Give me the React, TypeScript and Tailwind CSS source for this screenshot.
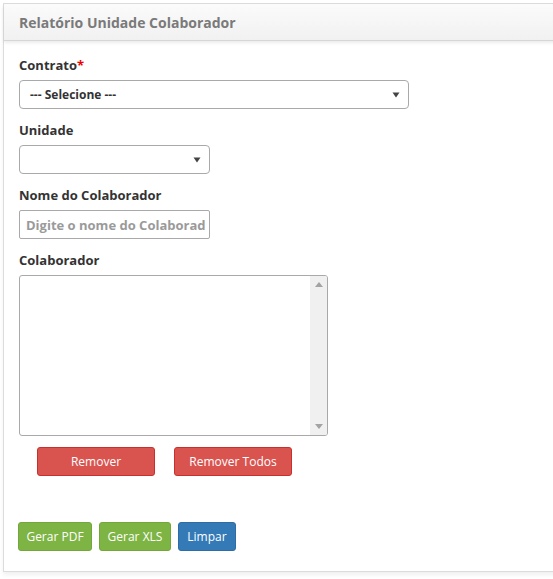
import React from "react";

function Caret() {
  return (
    <svg width="8" height="6" viewBox="0 0 8 6" className="absolute right-[8px] top-1/2 -translate-y-1/2">
      <path d="M0.5 0.5 L7.5 0.5 L4 5.5 Z" fill="#444" />
    </svg>
  );
}

export default function App() {
  return (
    <div className="bg-white w-[553px] h-[579px] overflow-hidden pt-[3px] pl-[3px]" style={{ fontFamily: '"Open Sans", "Liberation Sans", sans-serif' }}>
      <div className="w-[570px] border border-[#dcdcdc] bg-white shadow-[0_3px_4px_rgba(0,0,0,0.06)]">
        <div className="h-[37px] flex items-center pl-[15px] bg-gradient-to-b from-[#fbfbfb] to-[#f1f1f1] border-b border-[#d6d6d6] shadow-[0_2px_3px_rgba(0,0,0,0.08)]">
          <span className="text-[14px] font-bold text-[#7a7a7a]">Relatório Unidade Colaborador</span>
        </div>
        <div className="pl-[15px] pt-[15px] pb-[20px]">
          <div className="text-[13px] font-bold text-[#333] leading-[18px]">
            Contrato<span className="text-[#e00]">*</span>
          </div>
          <div className="relative mt-[6px] w-[390px] h-[29px] border border-[#a9a9a9] rounded-[4px] flex items-center pl-[10px]">
            <span className="text-[12px] font-bold text-[#333]">--- Selecione ---</span>
            <Caret />
          </div>

          <div className="mt-[12px] text-[13px] font-bold text-[#333] leading-[18px]">Unidade</div>
          <div className="relative mt-[6px] w-[191px] h-[29px] border border-[#a9a9a9] rounded-[4px]">
            <Caret />
          </div>

          <div className="mt-[12px] text-[13px] font-bold text-[#333] leading-[18px]">Nome do Colaborador</div>
          <input
            readOnly
            placeholder="Digite o nome do Colaborador"
            className="block mt-[6px] w-[191px] h-[29px] border border-[#a9a9a9] rounded-[2px] pl-[6px] pr-[4px] outline-none text-[13px] font-bold placeholder:text-[#9a9a9a] placeholder:font-bold"
          />

          <div className="mt-[12px] text-[13px] font-bold text-[#333] leading-[18px]">Colaborador</div>
          <div className="mt-[6px] w-[309px] h-[161px] border border-[#a9a9a9] rounded-[3px] flex justify-end overflow-hidden">
            <div className="w-[17px] h-full bg-[#f0f0f0] flex flex-col items-center justify-between py-[6px]">
              <svg width="8" height="5" viewBox="0 0 8 5"><path d="M0 5 L8 5 L4 0 Z" fill="#a3a3a3" /></svg>
              <svg width="8" height="5" viewBox="0 0 8 5"><path d="M0 0 L8 0 L4 5 Z" fill="#a3a3a3" /></svg>
            </div>
          </div>

          <div className="mt-[11px] ml-[18px] flex gap-[19px]">
            <button className="w-[118px] h-[29px] bg-[#d9534f] border border-[#c9302c] rounded-[3px] text-white text-[12px]">Remover</button>
            <button className="w-[118px] h-[29px] bg-[#d9534f] border border-[#c9302c] rounded-[3px] text-white text-[12px]">Remover Todos</button>
          </div>

          <div className="mt-[46px] -ml-[1px] flex gap-[7px]">
            <button className="w-[74px] h-[29px] bg-[#7db443] border border-[#72a83a] rounded-[3px] text-white text-[12px]">Gerar PDF</button>
            <button className="w-[72px] h-[29px] bg-[#7db443] border border-[#72a83a] rounded-[3px] text-white text-[12px]">Gerar XLS</button>
            <button className="w-[58px] h-[29px] bg-[#337ab7] border border-[#2e6da4] rounded-[3px] text-white text-[12px]">Limpar</button>
          </div>
        </div>
      </div>
    </div>
  );
}
